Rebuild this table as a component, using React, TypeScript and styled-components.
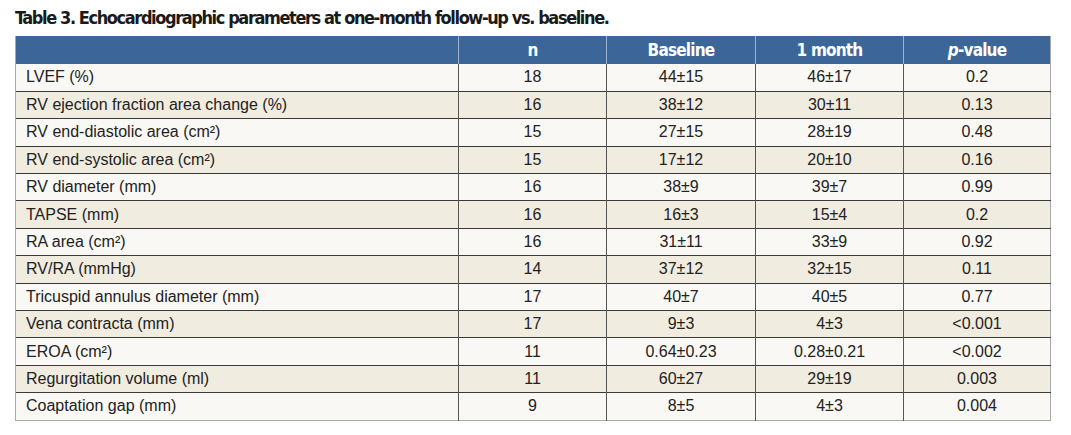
import * as React from 'react';
import styled, { createGlobalStyle } from 'styled-components';

const GlobalStyle = createGlobalStyle`
    html, body {
        margin: 0;
        padding: 0;
        background: #ffffff;
    }
`;

const Wrap = styled.div`
    width: 1071px;
    height: 435px;
    padding: 7px 15px 0;
    box-sizing: border-box;
    background: #ffffff;
`;

const Caption = styled.h2`
    margin: 0 0 8px;
    font-family: 'DejaVu Sans Condensed', 'DejaVu Sans', sans-serif;
    font-stretch: condensed;
    font-weight: bold;
    font-size: 18px;
    letter-spacing: -1.4px;
    line-height: 21px;
    color: #1a1a1a;
`;

const Table = styled.table`
    width: 1035px;
    border-collapse: collapse;
    table-layout: fixed;
    font-family: 'Liberation Sans', Arial, sans-serif;
    font-size: 16px;
    color: #222222;
    border-right: 1px solid #a9a9a9;
    border-bottom: 1px solid #a9a9a9;
`;

const HeadCell = styled.th`
    height: 28px;
    padding: 0;
    background: #3c6698;
    color: #ffffff;
    font-family: 'DejaVu Sans Condensed', 'DejaVu Sans', sans-serif;
    font-stretch: condensed;
    font-weight: bold;
    font-size: 17px;
    letter-spacing: -0.8px;
    text-align: center;
    border-left: 1px solid #9bb5d6;

    &:first-child {
        border-left: 1px solid #a9a9a9;
    }

    em {
        font-style: italic;
    }
`;

const Row = styled.tr<{ $shaded: boolean }>`
    height: 27.4px;
    background: ${({ $shaded }) => ($shaded ? '#f1ece0' : '#f9f8f4')};
    border-top: 1px solid #3a3a3a;

    &:first-child {
        border-top: none;
    }
`;

const Cell = styled.td<{ $label?: boolean }>`
    padding: 0 ${({ $label }) => ($label ? '10px' : '0')};
    text-align: ${({ $label }) => ($label ? 'left' : 'center')};
    border-left: 1px solid ${({ $label }) => ($label ? '#a9a9a9' : '#555555')};
    white-space: nowrap;
`;

const rows: [string, string, string, string, string][] = [
    ['LVEF (%)', '18', '44±15', '46±17', '0.2'],
    ['RV ejection fraction area change (%)', '16', '38±12', '30±11', '0.13'],
    ['RV end-diastolic area (cm²)', '15', '27±15', '28±19', '0.48'],
    ['RV end-systolic area (cm²)', '15', '17±12', '20±10', '0.16'],
    ['RV diameter (mm)', '16', '38±9', '39±7', '0.99'],
    ['TAPSE (mm)', '16', '16±3', '15±4', '0.2'],
    ['RA area (cm²)', '16', '31±11', '33±9', '0.92'],
    ['RV/RA (mmHg)', '14', '37±12', '32±15', '0.11'],
    ['Tricuspid annulus diameter (mm)', '17', '40±7', '40±5', '0.77'],
    ['Vena contracta (mm)', '17', '9±3', '4±3', '<0.001'],
    ['EROA (cm²)', '11', '0.64±0.23', '0.28±0.21', '<0.002'],
    ['Regurgitation volume (ml)', '11', '60±27', '29±19', '0.003'],
    ['Coaptation gap (mm)', '9', '8±5', '4±3', '0.004'],
];

function App() {
    return (
        <Wrap>
            <GlobalStyle />
            <Caption>Table 3. Echocardiographic parameters at one-month follow-up vs. baseline.</Caption>
            <Table>
                <colgroup>
                    <col style={{ width: 443 }} />
                    <col style={{ width: 148 }} />
                    <col style={{ width: 149 }} />
                    <col style={{ width: 148 }} />
                    <col style={{ width: 147 }} />
                </colgroup>
                <thead>
                    <tr>
                        <HeadCell />
                        <HeadCell>n</HeadCell>
                        <HeadCell>Baseline</HeadCell>
                        <HeadCell>1 month</HeadCell>
                        <HeadCell>
                            <em>p</em>-value
                        </HeadCell>
                    </tr>
                </thead>
                <tbody>
                    {rows.map(([label, n, base, month, p], i) => (
                        <Row key={label} $shaded={i % 2 === 1}>
                            <Cell $label>{label}</Cell>
                            <Cell>{n}</Cell>
                            <Cell>{base}</Cell>
                            <Cell>{month}</Cell>
                            <Cell>{p}</Cell>
                        </Row>
                    ))}
                </tbody>
            </Table>
        </Wrap>
    );
}

export default React.memo(App);
